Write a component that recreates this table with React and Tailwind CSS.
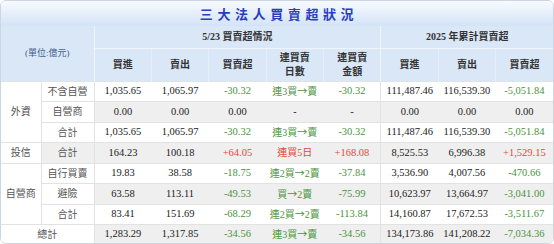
import React from 'react';

const G = 'text-[#4a9440]';
const R = 'text-[#e0483e]';

// each cell: [value, colour class]
const rows = [
  { group: '外資', span: 3, label: '不含自營', cells: [['1,035.65'], ['1,065.97'], ['-30.32', G], ['連3買→賣', G], ['-30.32', G], ['111,487.46'], ['116,539.30'], ['-5,051.84', G]] },
  { label: '自營商', cells: [['0.00'], ['0.00'], ['0.00'], ['-'], ['-'], ['0.00'], ['0.00'], ['0.00']] },
  { label: '合計', cells: [['1,035.65'], ['1,065.97'], ['-30.32', G], ['連3買→賣', G], ['-30.32', G], ['111,487.46'], ['116,539.30'], ['-5,051.84', G]] },
  { group: '投信', span: 1, label: '合計', cells: [['164.23'], ['100.18'], ['+64.05', R], ['連買5日', R], ['+168.08', R], ['8,525.53'], ['6,996.38'], ['+1,529.15', R]] },
  { group: '自營商', span: 3, label: '自行買賣', cells: [['19.83'], ['38.58'], ['-18.75', G], ['連2買→2賣', G], ['-37.84', G], ['3,536.90'], ['4,007.56'], ['-470.66', G]] },
  { label: '避險', cells: [['63.58'], ['113.11'], ['-49.53', G], ['買→2賣', G], ['-75.99', G], ['10,623.97'], ['13,664.97'], ['-3,041.00', G]] },
  { label: '合計', cells: [['83.41'], ['151.69'], ['-68.29', G], ['連2買→2賣', G], ['-113.84', G], ['14,160.87'], ['17,672.53'], ['-3,511.67', G]] },
  { total: '總計', cells: [['1,283.29'], ['1,317.85'], ['-34.56', G], ['連3買→賣', G], ['-34.56', G], ['134,173.86'], ['141,208.22'], ['-7,034.36', G]] },
];

const heights = ['h-[20px]', 'h-[21px]', 'h-[20px]', 'h-[21px]', 'h-[20px]', 'h-[21px]', 'h-[20px]', 'h-[20px]'];

// streak text: arrow drawn with the CJK font so it gets its full width
function Streak({ text }) {
  const parts = text.split('→');
  if (parts.length === 1) return text;
  return (
    <>
      {parts[0]}
      <span className="font-['Noto_Sans_CJK_TC',sans-serif]">→</span>
      {parts[1]}
    </>
  );
}

export default function App() {
  return (
    <div className="w-[554px] h-[244px] bg-white">
      <div className="w-[554px] h-[244px] border border-[#cdd6e0] rounded-[6px] overflow-hidden font-['Liberation_Serif','Noto_Sans_CJK_TC',serif]">
        {/* title */}
        <div className="h-[25px] flex items-center justify-center bg-gradient-to-b from-[#f8fbfe] to-[#d3e3f6]">
          <span className="font-['Noto_Sans_CJK_TC',sans-serif] font-bold text-[13px] tracking-[4.6px] pl-[4px] text-[#2a3dbf]">
            三大法人買賣超狀況
          </span>
        </div>

        <table className="w-full table-fixed border-collapse text-center">
          <colgroup>
            <col className="w-[40px]" />
            <col className="w-[53px]" />
            <col />
            <col />
            <col />
            <col />
            <col />
            <col />
            <col />
            <col />
          </colgroup>
          <thead className="bg-[#d9e7f7] text-[#333] font-bold text-[10px]">
            <tr className="h-[22px]">
              <th rowSpan={2} colSpan={2} className="border-r border-[#eef4fb] text-[9px] font-normal text-[#46608a]">
                (單位:億元)
              </th>
              <th colSpan={5} className="border-r border-b border-[#eef4fb]">5/23 買賣超情況</th>
              <th colSpan={3} className="border-b border-[#eef4fb]">2025 年累計買賣超</th>
            </tr>
            <tr className="h-[33px] leading-[14px]">
              <th className="border-r border-[#e6eef9]">買進</th>
              <th className="border-r border-[#e6eef9]">賣出</th>
              <th className="border-r border-[#e6eef9]">買賣超</th>
              <th className="border-r border-[#e6eef9]">連買賣<br />日數</th>
              <th className="border-r border-[#eef4fb]">連買賣<br />金額</th>
              <th className="border-r border-[#e6eef9]">買進</th>
              <th className="border-r border-[#e6eef9]">賣出</th>
              <th>買賣超</th>
            </tr>
          </thead>
          <tbody className="text-[10.5px] text-[#222]">
            {rows.map((r, i) => {
              const gray = i % 2 === 1;
              const bg = gray ? 'bg-[#efefef]' : 'bg-white';
              return (
                <tr key={i} className={`${heights[i]} border-t border-[#e2e2e2]`}>
                  {r.group && (
                    <td rowSpan={r.span} className="bg-white border-r border-[#e2e2e2] text-[10px] text-[#555]">
                      {r.group}
                    </td>
                  )}
                  {r.total ? (
                    <td colSpan={2} className="bg-white border-r border-[#e2e2e2] text-[10px] text-[#555]">
                      {r.total}
                    </td>
                  ) : (
                    <td className={`${r.group && r.span === 1 ? bg : 'bg-white'} border-r border-[#e2e2e2] text-[10px] text-[#555]`}>
                      {r.label}
                    </td>
                  )}
                  {r.cells.map(([v, c], j) => (
                    <td
                      key={j}
                      className={`${bg} ${c || ''} ${j === 4 ? 'border-r border-[#e2e2e2]' : ''} ${j === 3 ? 'text-[10px]' : ''}`}
                    >
                      {j === 3 ? <Streak text={v} /> : v}
                    </td>
                  ))}
                </tr>
              );
            })}
          </tbody>
        </table>
      </div>
    </div>
  );
}
